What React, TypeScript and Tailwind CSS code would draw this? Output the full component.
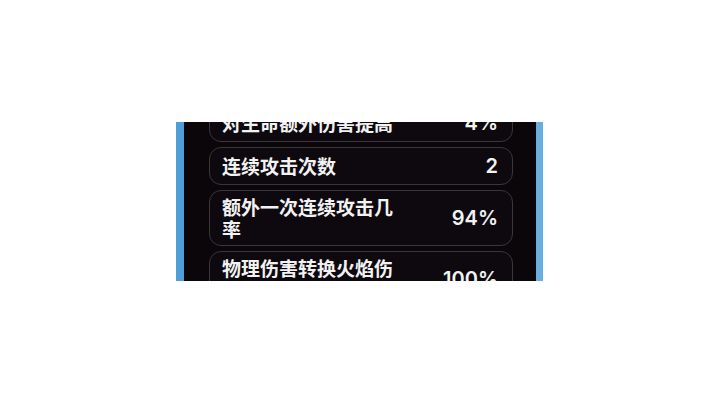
const rows = [
  { label: '对生命额外伤害提高', value: '4%' },
  { label: '连续攻击次数', value: '2' },
  { label: '额外一次连续攻击几率', value: '94%' },
  { label: '物理伤害转换火焰伤害', value: '100%' },
];

export default function App() {
  return (
    <div className="w-[720px] h-[404px] bg-white pt-[122px] pl-[176px]">
      <div className="flex w-[367px] h-[159px] overflow-hidden">
        <div className="w-[8px] bg-[#4f9fd6]" />
        <div className="flex-1 bg-[#0a0609] pl-[25px] pr-[23px]">
          <div className="flex flex-col gap-[5px] mt-[-18px]">
            {rows.map(r => (
              <div
                key={r.label}
                className="flex items-center justify-between min-h-[38px] py-[5px] pl-[12px] pr-[14px] rounded-[12px] border border-[#3a363c] bg-[#0d090e]"
              >
                <span
                  className="w-[185px] text-[19px] leading-[22px] font-bold text-[#f2f2f2]"
                  style={{ fontFamily: '"Noto Sans CJK SC", "Noto Sans", sans-serif' }}
                >
                  {r.label}
                </span>
                <span
                  className="text-[20px] leading-[22px] font-semibold text-[#f2f2f2]"
                  style={{ fontFamily: 'Inter, "Liberation Sans", sans-serif' }}
                >
                  {r.value}
                </span>
              </div>
            ))}
          </div>
        </div>
        <div className="w-[7px] bg-[#69aede]" />
      </div>
    </div>
  );
}
